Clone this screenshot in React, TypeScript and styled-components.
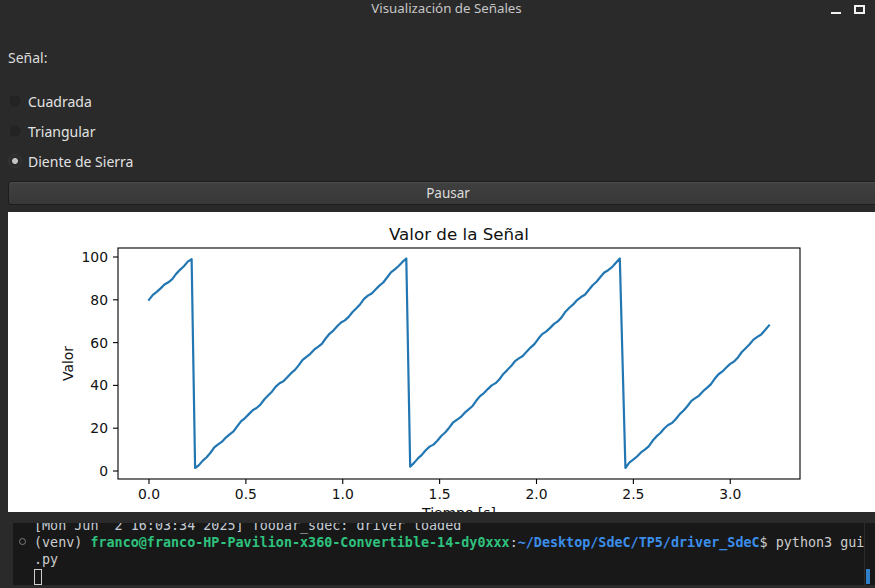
import React from "react";
import styled, { createGlobalStyle } from "styled-components";

const GlobalStyle = createGlobalStyle`
  html, body { margin: 0; padding: 0; background: #2a2a2a; }
  body { font-family: "Noto Sans", "DejaVu Sans", sans-serif; }
  * { box-sizing: border-box; }
`;

const Window = styled.div`
  width: 875px;
  height: 588px;
  overflow: hidden;
  background: #2a2a2a;
  display: flex;
  flex-direction: column;
`;

const TitleBar = styled.header`
  height: 17px;
  flex: none;
  display: grid;
  grid-template-columns: 1fr auto 1fr;
  padding-left: 18px;
`;

const Title = styled.div`
  grid-column: 2;
  font-size: 13.3px;
  line-height: 17px;
  color: #c6c6c6;
  white-space: nowrap;
`;

const Controls = styled.div`
  grid-column: 3;
  justify-self: end;
  display: flex;
  align-items: flex-start;
  gap: 13px;
  padding: 5px 10px 0 0;
`;

const MinimizeIcon = styled.span`
  display: block;
  width: 10px;
  height: 2px;
  margin-top: 7px;
  background: #f2f2f2;
`;

const MaximizeIcon = styled.span`
  display: block;
  width: 11px;
  height: 9px;
  border: 2px solid #f2f2f2;
`;

const Body = styled.main`
  flex: none;
  display: flex;
  flex-direction: column;
  padding-left: 8px;
`;

const FieldLabel = styled.div`
  margin-top: 26px;
  height: 30px;
  line-height: 30px;
  font-size: 14px;
  color: #dcdcdc;
`;

const RadioList = styled.div`
  margin-top: 13px;
  display: flex;
  flex-direction: column;
`;

const RadioRow = styled.label`
  height: 30px;
  display: flex;
  align-items: center;
  gap: 6px;
  font-size: 14px;
  color: #e2e2e2;
`;

const Radio = styled.input.attrs({ type: "radio" })`
  appearance: none;
  -webkit-appearance: none;
  flex: none;
  display: block;
  margin: 0;
  padding: 0;
  width: 14px;
  height: 14px;
  border-radius: 50%;
  background: #232323;
  border: 1px solid #2e2e2e;
  &:checked {
    background: radial-gradient(circle, #c2c2c2 0 2.6px, #2c2c2c 3.3px);
    border-color: #363636;
  }
`;

const PauseButton = styled.button`
  flex: none;
  margin-top: 5px;
  width: 880px;
  height: 24px;
  padding: 0;
  border: 1px solid #1d1d1d;
  border-radius: 3px;
  background: linear-gradient(#404040, #383838);
  box-shadow: inset 0 1px 0 #4a4a4a;
  color: #dcdcdc;
  font-family: "Noto Sans", sans-serif;
  font-size: 13.5px;
`;

const ChartCanvas = styled.div`
  flex: none;
  margin-top: 7px;
  width: 880px;
  height: 300px;
  background: #ffffff;
  overflow: hidden;
  svg { display: block; }
`;

const Terminal = styled.section`
  flex: none;
  height: 76px;
  padding: 11px 0 3px 13px;
  display: flex;
  background: #2a2a2a;
`;

const TermPanel = styled.div`
  flex: 1;
  display: flex;
  background: #181818;
  overflow: hidden;
`;

const TermLines = styled.div`
  flex: 1;
  border-right: 1px solid #2c2c2c;
  font-family: "DejaVu Sans Mono", "Liberation Mono", monospace;
  font-size: 13.4px;
  line-height: 17px;
  color: #cccccc;
  white-space: pre;
  overflow: hidden;
`;

const TermScroll = styled.div`
  margin-top: -6px;
`;

const TermLine = styled.div<{ $dim?: boolean }>`
  display: grid;
  grid-template-columns: 21px auto;
  align-items: center;
  height: 17px;
  color: ${(p) => (p.$dim ? "#c5cdd6" : "#cccccc")};
`;

const Gutter = styled.span<{ $mark?: boolean }>`
  display: block;
  width: 7px;
  height: 7px;
  margin: 0 0 3px 6px;
  border-radius: 50%;
  border: ${(p) => (p.$mark ? "1px solid #7d7d7d" : "none")};
`;

const Green = styled.span`
  color: #2ec27e;
  font-weight: bold;
`;

const Blue = styled.span`
  color: #3b8eea;
  font-weight: bold;
`;

const Cursor = styled.span`
  display: block;
  width: 8px;
  height: 16px;
  margin-top: 1px;
  border: 1px solid #cfcfcf;
`;

const ScrollGutter = styled.div`
  width: 10px;
  flex: none;
  display: flex;
  align-items: flex-end;
  padding: 0 0 1px 1px;
`;

const ScrollThumb = styled.span`
  display: block;
  width: 4px;
  height: 15px;
  background: #2f80c8;
`;

/* ---------- chart ---------- */
const xs = (t: number) => 141 + t * 193.75;
const ys = (v: number) => 259 - v * 2.14;

const segments: [number, number, number, number][] = [
  [0, 80, 0.22, 99],
  [0.238, 1.4, 1.328, 99.3],
  [1.348, 2, 2.43, 99.3],
  [2.459, 1.4, 3.2, 68],
];

function buildPath(): string {
  const pts: string[] = [];
  segments.forEach(([t0, v0, t1, v1]) => {
    const n = Math.max(2, Math.round((t1 - t0) / 0.02));
    for (let i = 0; i <= n; i++) {
      const t = t0 + ((t1 - t0) * i) / n;
      let v = v0 + ((v1 - v0) * i) / n;
      if (i > 0 && i < n) v += 0.45 * Math.sin(t * 41) + 0.3 * Math.sin(t * 97);
      pts.push(`${xs(t).toFixed(2)},${ys(v).toFixed(2)}`);
    }
  });
  return "M" + pts.join(" L");
}

const SignalChart: React.FC = () => {
  const d = buildPath();
  const yTicks = [0, 20, 40, 60, 80, 100];
  const xTicks = [0, 0.5, 1, 1.5, 2, 2.5, 3];
  const font = "DejaVu Sans, sans-serif";
  return (
    <svg width={880} height={300} viewBox="0 0 880 300">
      <text x={451} y={28} textAnchor="middle" fontFamily={font} fontSize={16.7} fill="#111">
        Valor de la Señal
      </text>
      <path d={d} fill="none" stroke="#2277b2" strokeWidth={2.2} strokeLinejoin="round" strokeLinecap="square" />
      <rect x={110} y={36} width={682} height={231} fill="none" stroke="#000" strokeWidth={1.1} />
      {yTicks.map((v) => (
        <g key={v}>
          <line x1={105} x2={110} y1={ys(v)} y2={ys(v)} stroke="#000" strokeWidth={1.1} />
          <text x={100} y={ys(v)} textAnchor="end" dominantBaseline="central" fontFamily={font} fontSize={13.9} fill="#111">
            {v}
          </text>
        </g>
      ))}
      {xTicks.map((t) => (
        <g key={t}>
          <line x1={xs(t)} x2={xs(t)} y1={267} y2={272} stroke="#000" strokeWidth={1.1} />
          <text x={xs(t)} y={287} textAnchor="middle" fontFamily={font} fontSize={13.9} fill="#111">
            {t.toFixed(1)}
          </text>
        </g>
      ))}
      <text transform="translate(65,151.5) rotate(-90)" textAnchor="middle" fontFamily={font} fontSize={13.9} fill="#111">
        Valor
      </text>
      <text x={451} y={305.5} textAnchor="middle" fontFamily={font} fontSize={13.9} fill="#111">
        Tiempo [s]
      </text>
    </svg>
  );
};

export default function App() {
  const [signal, setSignal] = React.useState("sierra");
  const options = [
    { id: "cuadrada", label: "Cuadrada" },
    { id: "triangular", label: "Triangular" },
    { id: "sierra", label: "Diente de Sierra" },
  ];
  return (
    <>
      <GlobalStyle />
      <Window>
        <TitleBar>
          <Title>Visualización de Señales</Title>
          <Controls>
            <MinimizeIcon />
            <MaximizeIcon />
          </Controls>
        </TitleBar>
        <Body>
          <FieldLabel>Señal:</FieldLabel>
          <RadioList>
            {options.map((o) => (
              <RadioRow key={o.id}>
                <Radio name="signal" checked={signal === o.id} onChange={() => setSignal(o.id)} />
                {o.label}
              </RadioRow>
            ))}
          </RadioList>
          <PauseButton>Pausar</PauseButton>
          <ChartCanvas>
            <SignalChart />
          </ChartCanvas>
        </Body>
        <Terminal>
          <TermPanel>
            <TermLines>
              <TermScroll>
                <TermLine $dim>
                  <Gutter />
                  <span>[Mon Jun  2 16:03:34 2025] Toobar_sdec: driver loaded</span>
                </TermLine>
                <TermLine>
                  <Gutter $mark />
                  <span>
                    (venv) <Green>franco@franco-HP-Pavilion-x360-Convertible-14-dy0xxx</Green>:
                    <Blue>~/Desktop/SdeC/TP5/driver_SdeC</Blue>$ python3 gui
                  </span>
                </TermLine>
                <TermLine>
                  <Gutter />
                  <span>.py</span>
                </TermLine>
                <TermLine>
                  <Gutter />
                  <Cursor />
                </TermLine>
              </TermScroll>
            </TermLines>
            <ScrollGutter>
              <ScrollThumb />
            </ScrollGutter>
          </TermPanel>
        </Terminal>
      </Window>
    </>
  );
}
